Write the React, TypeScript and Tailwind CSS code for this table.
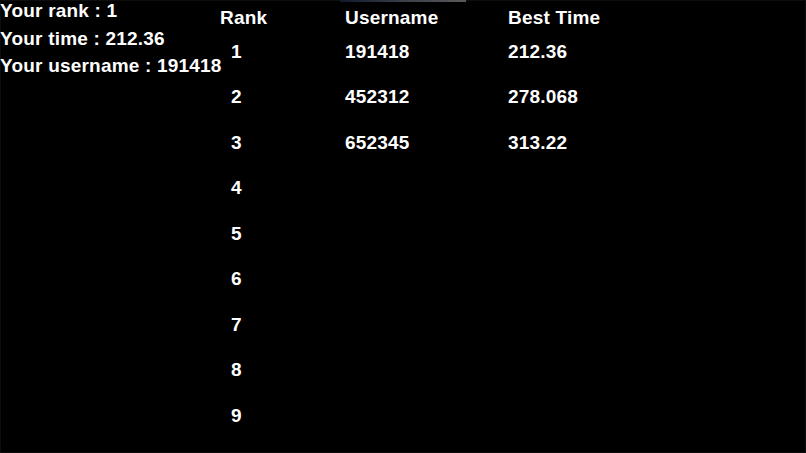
const players = [
  { rank: 1, username: "191418", time: "212.36" },
  { rank: 2, username: "452312", time: "278.068" },
  { rank: 3, username: "652345", time: "313.22" },
  { rank: 4, username: "", time: "" },
  { rank: 5, username: "", time: "" },
  { rank: 6, username: "", time: "" },
  { rank: 7, username: "", time: "" },
  { rank: 8, username: "", time: "" },
  { rank: 9, username: "", time: "" },
];

function PlayerInfo() {
  return (
    <div className="w-[220px] shrink-0 whitespace-nowrap leading-[27.5px]">
      <p className="-mt-[3px]">Your rank : 1</p>
      <p>Your time : 212.36</p>
      <p>Your username : 191418</p>
    </div>
  );
}

function Leaderboard() {
  return (
    <div className="flex flex-col">
      <div className="grid h-[29px] grid-cols-[125px_163px_1fr] items-start pt-[7px] leading-[22px]">
        <span>Rank</span>
        <span>Username</span>
        <span>Best Time</span>
      </div>

      {players.map((player) => (
        <div
          key={player.rank}
          className="grid h-[45.5px] grid-cols-[125px_163px_1fr] items-center"
        >
          <span className="pl-[11px]">{player.rank}</span>
          <span>{player.username}</span>
          <span>{player.time}</span>
        </div>
      ))}
    </div>
  );
}

export default function App() {
  return (
    <div className="relative flex h-[453px] w-[806px] overflow-hidden bg-black font-['Liberation_Sans',Arial,sans-serif] text-[19px] font-bold tracking-[0.2px] text-white shadow-[inset_0_0_0_1px_#0d0d0d]">
      <div className="absolute left-[340px] top-0 h-[2px] w-[126px] bg-gradient-to-r from-[#0f1a2e] via-[#3a3f48] to-[#5a5a5a]" />
      <PlayerInfo />
      <Leaderboard />
    </div>
  );
}
